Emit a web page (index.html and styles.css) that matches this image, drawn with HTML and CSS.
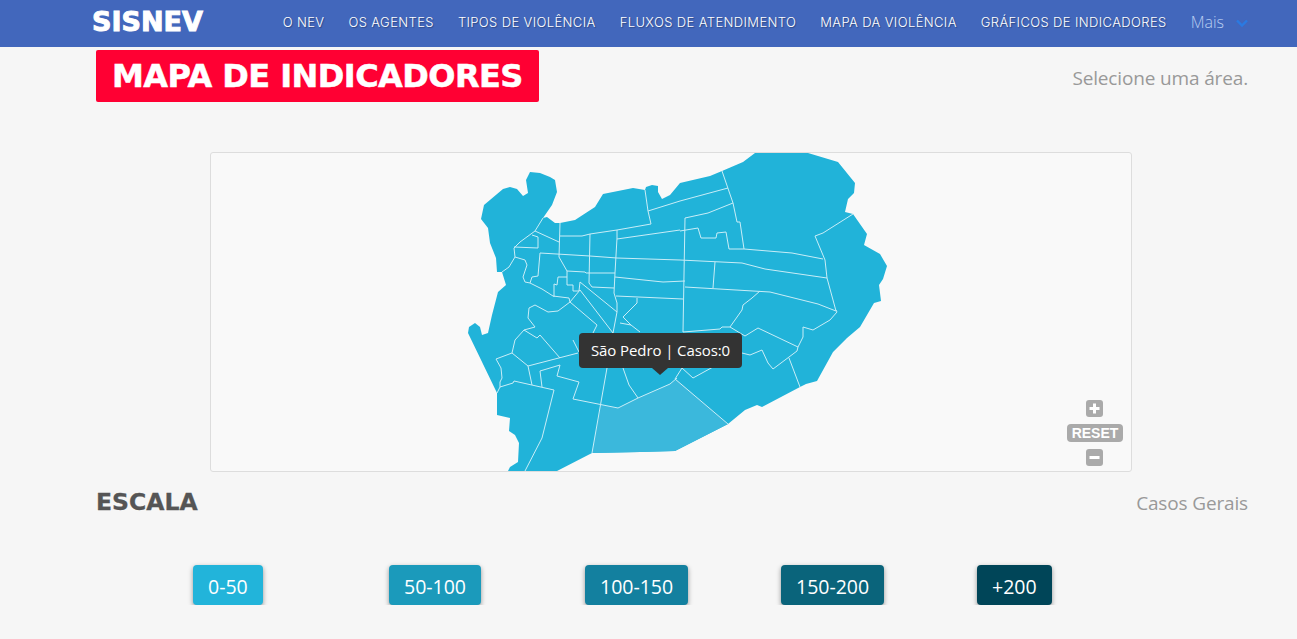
FILE: index.html
```html
<!DOCTYPE html>
<html lang="pt-BR">
<head>
  <meta charset="UTF-8" />
  <title>SISNEV - Mapa de Indicadores</title>
  <link rel="stylesheet" href="styles.css">
</head>
<body>
  <header class="topbar">
    <a class="logo" href="#">SISNEV</a>
    <nav class="nav">
      <a href="#">O NEV</a>
      <a href="#">OS AGENTES</a>
      <a href="#">TIPOS DE VIOLÊNCIA</a>
      <a href="#">FLUXOS DE ATENDIMENTO</a>
      <a href="#">MAPA DA VIOLÊNCIA</a>
      <a href="#">GRÁFICOS DE INDICADORES</a>
      <a class="more" href="#">Mais
        <svg class="chevron" width="12" height="8" viewBox="0 0 12 8"><path d="M1 1.5 6 6.5 11 1.5" fill="none" stroke="#2a7ae2" stroke-width="2.4"/></svg>
      </a>
    </nav>
  </header>

  <main class="container">
    <div class="title-row">
      <h1 class="badge">MAPA DE INDICADORES</h1>
      <span class="hint">Selecione uma área.</span>
    </div>

    <div class="map">
      <svg class="map-svg" width="920" height="318" viewBox="211 153 920 318">
        <path class="land" d="M755 153 808 153 838 162 855 183 854 193 848 199 845 212 853 214 867 234 864 245 880 254 887 266 883 279 879 285 881 301 874 303 860 327 847 338 833 352 817 381 806 384 800 387 762 407 757 405 745 410 728 424 675 451 640 452 592 453 557 471 508 471 510 467 518 462 519 443 515 435 509 431 510 418 497 415 497 393 468 333 469 327 475 323 480 327 482 335 488 333 492 315 498 292 506 285 502 272 497 272 496 258 490 243 488 228 481 219 484 205 503 189 510 187 517 189 523 196 528 193 526 180 530 172 540 173 550 177 555 180 557 192 552 205 543 218 547 217 555 223 560 223 575 220 595 207 603 194 633 188 645 190 646 187 652 185 658 186 658 192 662 199 670 195 680 183 710 176 722 171 743 162Z"/>
        <path class="active" d="M601 405 618 408 638 398 670 384 676 379 728 424 675 451 640 452 592 453Z"/>
        <path class="lines" d="M645 190 648 211 651 224 617 230 590 234 582 236 560 236
          M648 211 680 201 728 188
          M560 223 559 257 567 271
          M535 231 559 242
          M543 218 535 231 520 242 514 248 515 257 509 267 502 272
          M532 235 538 237 538 248 514 247
          M540 253 590 256 617 258 680 260
          M540 253 538 276 532 277 530 283 525 282 523 277 527 265 525 260 515 257
          M530 283 542 289 553 296 569 298 570 302 558 311
          M554 297 554 284 557 285 558 277 567 277 567 285 573 285 573 291 579 291 580 282 617 312
          M567 271 585 272 586 273 590 273 615 273
          M567 271 567 277
          M590 234 589 283 592 287 614 288
          M617 230 617 238 615 273 614 293 617 303 617 312 613 333
          M617 239 680 230
          M685 218 708 213 733 203
          M685 218 683 332
          M680 231 698 228 701 238 716 238 717 233 726 232 729 249 744 249 792 253 823 259
          M722 171 733 203 737 222 740 222 744 249
          M815 236 823 233 853 214
          M815 236 825 260 827 278 836 311
          M680 260 742 263 765 269 827 278
          M715 262 713 288
          M685 287 770 292 818 304 836 311
          M615 277 663 282 685 281
          M616 296 683 299
          M637 298 637 303 623 317 631 325 620 323
          M631 325 640 332
          M760 291 752 298 743 305 742 310 730 327 722 327 720 329 683 332
          M558 311 548 312 535 305 529 308 528 318 535 327 524 330 515 340 512 353 496 359 501 368 502 378 500 382 500 387 497 393
          M524 330 537 338 540 335 560 358
          M512 353 528 366 578 353
          M528 366 532 385
          M500 387 513 383 514 381 554 390 542 438 525 471
          M540 371 560 365 557 376 579 382
          M540 371 542 387
          M579 382 573 399 618 408 638 398 670 384 677 378
          M613 333 607 368 592 453
          M623 368 629 385 638 398
          M682 368 675 379 728 424
          M682 368 693 378 713 367
          M742 353 750 355 762 350 768 363 773 369 797 351 798 347 758 328 745 336 730 327
          M798 347 803 337 803 327 813 330 830 320 837 312 836 310
          M789 358 800 387
          M573 340 579 352
          M570 302 597 325 592 335
          M570 302 580 290 613 333"/>
      </svg>

      <div class="tooltip">São Pedro | Casos:0</div>

      <div class="zoom-controls">
        <svg class="zoom-btn" width="17" height="17" viewBox="0 0 17 17"><rect width="17" height="17" rx="3" fill="#aaa"/><path d="M8.5 3.5v10M3.5 8.5h10" stroke="#fff" stroke-width="3"/></svg>
        <span class="reset">RESET</span>
        <svg class="zoom-btn" width="17" height="17" viewBox="0 0 17 17"><rect width="17" height="17" rx="3" fill="#aaa"/><path d="M3.5 8.5h10" stroke="#fff" stroke-width="3"/></svg>
      </div>
    </div>

    <div class="scale-row">
      <h2 class="scale-title">ESCALA</h2>
      <span class="hint">Casos Gerais</span>
    </div>

    <div class="legend">
      <div><span class="tag tag-1">0-50</span></div>
      <div><span class="tag tag-2">50-100</span></div>
      <div><span class="tag tag-3">100-150</span></div>
      <div><span class="tag tag-4">150-200</span></div>
      <div><span class="tag tag-5">+200</span></div>
    </div>
  </main>
</body>
</html>
```
FILE: styles.css
```css
body {
  font-family: "Open Sans", "Noto Sans", sans-serif;
  background: #f6f6f6;
  color: #333;
  margin: 0;
}

a {
  color: inherit;
  text-decoration: none;
}

.topbar {
  display: flex;
  justify-content: space-between;
  align-items: center;
  height: 47px;
  padding: 0 49px 4px 92px;
  box-sizing: border-box;
  background: #4267bc;
}

.logo {
  font-family: "DejaVu Sans", sans-serif;
  font-size: 27px;
  font-weight: 700;
  -webkit-text-stroke: 1px #fff;
  color: #fff;
}

.nav {
  display: flex;
  align-items: center;
  gap: 24px;
  font-family: Inter, sans-serif;
  font-size: 13px;
  font-weight: 300;
  letter-spacing: 0.38px;
  color: #fff;
  text-shadow: 1px 1px 1px rgba(0, 0, 0, 0.3);
}

.more {
  display: flex;
  align-items: center;
  gap: 12px;
  font-family: "Open Sans", sans-serif;
  font-size: 16px;
  letter-spacing: 0;
  color: #b9cdf0;
  text-shadow: none;
}

.chevron {
  margin-top: 3px;
}

.container {
  margin: 0 49px 0 96px;
}

.title-row {
  display: flex;
  justify-content: space-between;
  align-items: center;
  padding-top: 3px;
}

.badge {
  margin: 0;
  padding: 0 16px;
  height: 52px;
  line-height: 52px;
  font-family: "DejaVu Sans", sans-serif;
  font-size: 32px;
  font-weight: 700;
  letter-spacing: -0.55px;
  -webkit-text-stroke: 0.5px #fff;
  color: #fff;
  background: #ff0033;
  border-radius: 2px;
}

.hint {
  font-size: 19px;
  letter-spacing: -0.15px;
  color: #999;
}

.title-row .hint {
  padding-top: 4px;
}

.map {
  position: relative;
  width: 920px;
  height: 318px;
  margin: 50px 0 0 114px;
  background: #f9f9f9;
  border: 1px solid #ddd;
  border-radius: 3px;
  overflow: hidden;
}

.map-svg {
  display: block;
}

.land {
  fill: #21b3d9;
}

.active {
  fill: #3bb8dc;
}

.lines {
  fill: none;
  stroke: #c9edf7;
  stroke-width: 1;
}

.tooltip {
  position: absolute;
  left: 368px;
  top: 180px;
  width: 163px;
  height: 35px;
  line-height: 35px;
  text-align: center;
  font-size: 15px;
  letter-spacing: -0.1px;
  color: #fff;
  background: #333;
  border-radius: 4px;
}

.tooltip::after {
  content: "";
  position: absolute;
  left: 73px;
  top: 35px;
  border: 8px solid transparent;
  border-top: 7px solid #333;
  border-bottom: 0;
}

.zoom-controls {
  position: absolute;
  right: 8px;
  bottom: 5px;
  display: flex;
  flex-direction: column;
  align-items: center;
  gap: 7px;
}

.zoom-btn {
  display: block;
  margin-right: 1px;
}

.reset {
  display: block;
  width: 56px;
  height: 18px;
  line-height: 18px;
  text-align: center;
  font-family: "Liberation Sans", sans-serif;
  font-size: 14px;
  font-weight: 700;
  color: #fff;
  background: #aaa;
  border-radius: 4px;
}

.scale-row {
  display: flex;
  justify-content: space-between;
  align-items: baseline;
  margin-top: 16px;
}

.scale-title {
  margin: 0;
  font-family: "DejaVu Sans", sans-serif;
  font-size: 23.5px;
  font-weight: 700;
  -webkit-text-stroke: 0.3px #555;
  color: #555;
}

.legend {
  display: grid;
  grid-template-columns: repeat(5, 196px);
  margin: 49px 0 0 97px;
}

.tag {
  display: inline-block;
  height: 40px;
  line-height: 43px;
  padding: 0 15px;
  font-size: 19.5px;
  color: #fff;
  border-radius: 4px;
  box-shadow: 0 2px 5px rgba(0, 0, 0, 0.4);
}

.tag-1 { background: #22b4da; }
.tag-2 { background: #1b9abb; }
.tag-3 { background: #13809f; }
.tag-4 { background: #0a647b; }
.tag-5 { background: #004558; }
```
